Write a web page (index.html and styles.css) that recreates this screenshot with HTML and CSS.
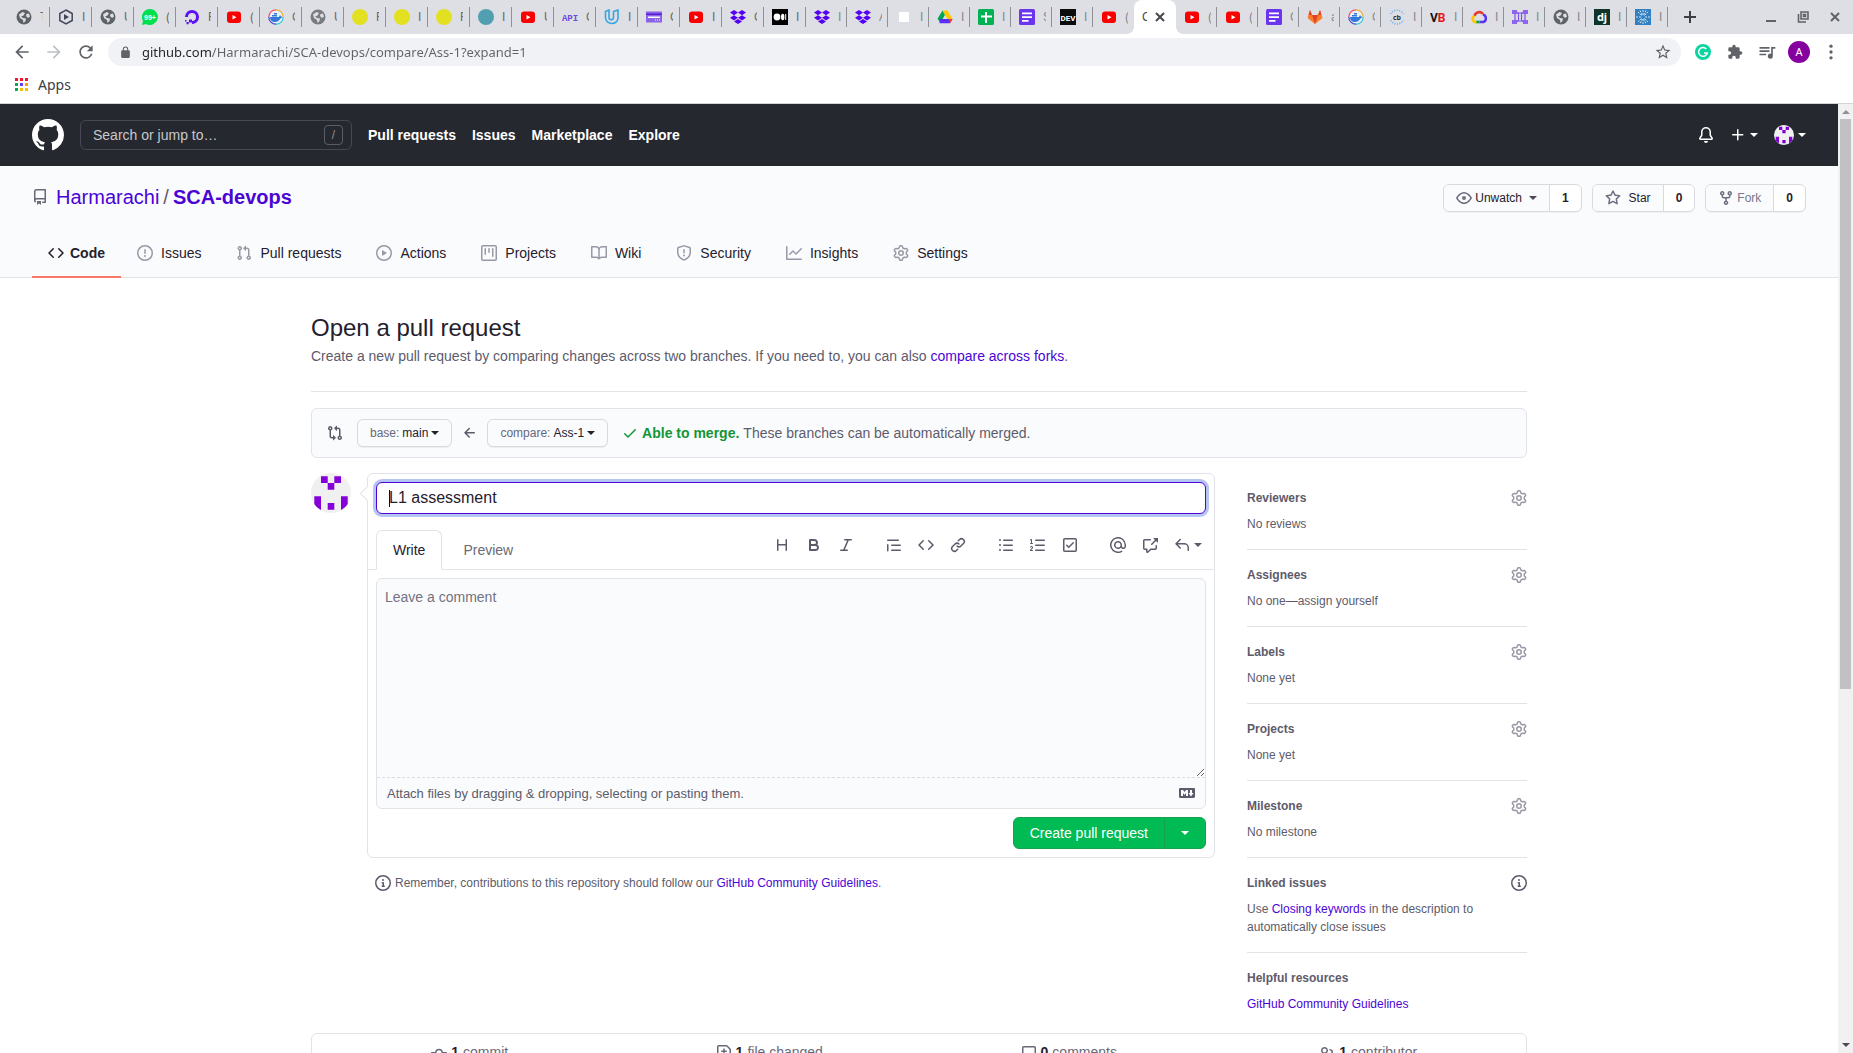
FILE: index.html
```html
<!DOCTYPE html>
<html lang="en">
<head>
<meta charset="utf-8">
<title>Comparing main...Ass-1 · Harmarachi/SCA-devops</title>
<link rel="stylesheet" href="styles.css">
</head>
<body>
<svg class="sprite" aria-hidden="true">
  <!-- tab favicons -->
  <symbol id="f-globe" viewBox="0 0 16 16"><circle cx="8" cy="8" r="7.500" fill="#5f6368"/><path d="M3 5.500L6.500 3 9 4 7.500 6.500 5 7.500 7 9l3 .5-.5 2.500L7.500 14 7 11 4 9zM10.500 5l2.500-.5 1 3-2 1.500-2-2z" fill="#dedfe4"/></symbol>
  <symbol id="f-hex" viewBox="0 0 16 16"><path d="M8 1l6.200 3.500v7L8 15l-6.200-3.500v-7z" fill="none" stroke="#44475a" stroke-width="1.500"/><path d="M6 5l5 3-5 3z" fill="#44475a"/></symbol>
  <symbol id="f-wa" viewBox="0 0 16 16"><path d="M8 0a8 8 0 11-4 15L0 16l1-4A8 8 0 018 0z" fill="#00e04f"/><text x="8" y="10.500" text-anchor="middle" font-size="7" font-weight="700" font-family="Liberation Sans" fill="#fff">99+</text></symbol>
  <symbol id="f-do" viewBox="0 0 16 16"><path d="M8 13.500A5.500 5.500 0 102.500 8" fill="none" stroke="#5b10f5" stroke-width="3"/><path d="M5 10.500h3v3H5zM2.500 13h2.200v2.200H2.500zM1 11h1.500v1.500H1z" fill="#5b10f5"/></symbol>
  <symbol id="f-yt" viewBox="0 0 16 16"><rect x="1" y="2.500" width="14" height="11.500" rx="3" fill="#fa0000"/><path d="M6.500 6l4 2.200-4 2.300z" fill="#fff"/></symbol>
  <symbol id="f-docker" viewBox="0 0 16 16"><circle cx="8" cy="8" r="7.300" fill="#e9eef6"/><path d="M8 .8A7.200 7.200 0 00.8 8" fill="none" stroke="#f2506e" stroke-width="1.200"/><path d="M8 .8A7.200 7.200 0 0115.200 8" fill="none" stroke="#e8b030" stroke-width="1.200"/><path d="M15.200 8A7.200 7.200 0 018 15.200" fill="none" stroke="#27c8d8" stroke-width="1.200"/><path d="M.8 8A7.200 7.200 0 008 15.200" fill="none" stroke="#4540c8" stroke-width="1.200"/><path d="M2 8h9l1-2 1 1.500 1.500.5-2 1.500C11 12 9 13 7 13 4 13 2 11 2 8zM4 6h5v1.500H4zM6 4h3v1.500H6z" fill="#3377d8"/></symbol>
  <symbol id="f-yellow" viewBox="0 0 16 16"><circle cx="8" cy="8" r="8" fill="#e3e022"/></symbol>
  <symbol id="f-teal" viewBox="0 0 16 16"><circle cx="8" cy="8" r="8" fill="#529fb1"/></symbol>
  <symbol id="f-api" viewBox="0 0 16 16"><text x="8" y="11.500" text-anchor="middle" font-size="9" font-weight="700" font-family="Liberation Mono" fill="#6b4be0">API</text></symbol>
  <symbol id="f-udacity" viewBox="0 0 16 16"><path d="M1.500 2.500L5 1v7.500c0 3 4.500 3 4.500 0V2.500L14 1v8c0 3-2.500 5.500-6 5.500S1.500 12 1.500 9z" fill="none" stroke="#38a5e0" stroke-width="1.600"/></symbol>
  <symbol id="f-card" viewBox="0 0 16 16"><path d="M0 2.500h16v11H0z" fill="#8b63e8"/><path d="M0 4.500h16v1.500H0z" fill="#5a1ed2"/><path d="M2 7.500h12v1.500H2z" fill="#fff"/><path d="M9 10.500h1v1H9zm2 0h1v1h-1zm2 0h1v1h-1z" fill="#fff"/></symbol>
  <symbol id="f-dropbox" viewBox="0 0 16 16"><path d="M4 1l4 2.600L4 6.200 0 3.600zM12 1l4 2.600-4 2.600-4-2.600zM4 6.200l4 2.600-4 2.600L0 8.800zM12 6.200l4 2.600-4 2.600-4-2.600zM8 10l4 2.400L8 15l-4-2.600z" fill="#5400f5"/></symbol>
  <symbol id="f-medium" viewBox="0 0 16 16"><path d="M0 0h16v16H0z" fill="#000"/><circle cx="5" cy="8" r="3.400" fill="#fff"/><ellipse cx="10.700" cy="8" rx="1.700" ry="3.200" fill="#fff"/><path d="M13.200 5h1v6h-1z" fill="#fff"/></symbol>
  <symbol id="f-blank" viewBox="0 0 16 16"><path d="M3 3h10v10H3z" fill="#fff"/></symbol>
  <symbol id="f-drive" viewBox="0 0 16 16"><path d="M5.500 1.500L8 5.800 3.500 14 .5 9.800z" fill="#00a650"/><path d="M5.500 1.500h5l5 8.500h-5z" fill="#fdc800"/><path d="M3 10h12.500L13 14.200H2.500z" fill="#5b2ff0"/><path d="M11.500 10h4L13 14.200z" fill="#ee3a2c"/></symbol>
  <symbol id="f-sheets" viewBox="0 0 16 16"><rect width="16" height="16" rx="1.500" fill="#00b252"/><path d="M7 3h2v11H7zM3 6.500h11v2H3z" fill="#fff"/></symbol>
  <symbol id="f-docs" viewBox="0 0 16 16"><rect width="16" height="16" rx="1.500" fill="#6b35f0"/><path d="M3 3.500h10v1.700H3zm0 3.700h10v1.700H3zM3 11h6.500v1.700H3z" fill="#fff"/></symbol>
  <symbol id="f-dev" viewBox="0 0 16 16"><path d="M0 0h16v16H0z" fill="#0c0c0c"/><text x="8" y="11.500" text-anchor="middle" font-size="8" font-weight="700" font-family="Roboto" fill="#fff">DEV</text></symbol>
  <symbol id="f-gitlab" viewBox="0 0 16 16"><path d="M3 1l2 5h6l2-5 2.500 8L8 15 .5 9z" fill="#fa7d2a"/><path d="M3 1l2 5H1.500zM13 1l-2 5h3.500zM5 6h6l-3 9z" fill="#e04428"/></symbol>
  <symbol id="f-cb" viewBox="0 0 16 16"><circle cx="8" cy="8" r="7" fill="none" stroke="#79b3ea" stroke-width="2" stroke-dasharray="1 1.500"/><path d="M0 5h16v6H0z" fill="#dedfe4"/><text x="8" y="10.500" text-anchor="middle" font-size="7" font-weight="700" font-family="Noto Sans" fill="#333">cb</text></symbol>
  <symbol id="f-vb" viewBox="0 0 16 16"><text x="0" y="12.500" font-size="12" font-weight="700" font-family="Roboto" fill="#111">V<tspan fill="#e81414">B</tspan></text></symbol>
  <symbol id="f-cloud" viewBox="0 0 16 16"><path d="M3.500 7A4.800 4.800 0 0112 5" fill="none" stroke="#e8392e" stroke-width="2.600"/><path d="M12 5.500a4 4 0 01.5 7.500H8.500" fill="none" stroke="#5a35f0" stroke-width="2.600"/><path d="M8.500 13H5" stroke="#00a650" stroke-width="2.600"/><path d="M5.500 13A3.200 3.200 0 013.500 7" fill="none" stroke="#fdc400" stroke-width="2.600"/></symbol>
  <symbol id="f-grid" viewBox="0 0 16 16"><path d="M3 2v12M13 2v12M5 3l1.500 2v6L5 13M11 3L9.500 5v6L11 13M4 4h8M4 12h8" fill="none" stroke="#7a4ee8" stroke-width="1.200"/><path d="M0 1h5v4H0zm11 0h5v4h-5zM0 11h5v4H0zm11 0h5v4h-5z" fill="#8c64ee"/></symbol>
  <symbol id="f-dj" viewBox="0 0 16 16"><path d="M0 0h16v16H0z" fill="#10342a"/><text x="8" y="12" text-anchor="middle" font-size="11" font-weight="700" font-family="Noto Sans" fill="#fff">dj</text></symbol>
  <symbol id="f-burst" viewBox="0 0 16 16"><path d="M0 0h16v16H0z" fill="#3280c2"/><path d="M8 1v14M1 8h14M3 3l10 10M13 3L3 13M5 1.500l6 13M11 1.500l-6 13" stroke="#cde2f2" stroke-width="1" stroke-dasharray="2 1"/><circle cx="8" cy="8" r="1.800" fill="#3280c2"/></symbol>
  <!-- browser toolbar -->
  <symbol id="b-back" viewBox="0 0 24 24"><path d="M20 11H7.830l5.590-5.590L12 4l-8 8 8 8 1.410-1.410L7.830 13H20v-2z"/></symbol>
  <symbol id="b-fwd" viewBox="0 0 24 24"><path d="M4 11h12.170l-5.590-5.590L12 4l8 8-8 8-1.410-1.410L16.170 13H4v-2z"/></symbol>
  <symbol id="b-reload" viewBox="0 0 24 24"><path d="M17.650 6.350A7.958 7.958 0 0012 4c-4.420 0-7.990 3.580-7.990 8s3.570 8 7.990 8c3.730 0 6.840-2.550 7.730-6h-2.080A5.990 5.990 0 0112 18c-3.310 0-6-2.690-6-6s2.690-6 6-6c1.660 0 3.140.69 4.220 1.780L13 11h7V4l-2.350 2.350z"/></symbol>
  <symbol id="b-lock" viewBox="0 0 24 24"><path d="M18 8h-1V6A5 5 0 007 6v2H6a2 2 0 00-2 2v10c0 1.100.9 2 2 2h12a2 2 0 002-2V10a2 2 0 00-2-2zM8.900 6a3.100 3.100 0 016.200 0v2H8.900z"/></symbol>
  <symbol id="b-star" viewBox="0 0 24 24"><path d="M22 9.240l-7.190-.62L12 2 9.190 8.630 2 9.240l5.460 4.730L5.820 21 12 17.270 18.180 21l-1.630-7.030L22 9.240zM12 15.400l-3.760 2.270 1-4.280-3.320-2.880 4.380-.38L12 6.100l1.710 4.040 4.380.38-3.320 2.880 1 4.280L12 15.400z"/></symbol>
  <symbol id="b-gram" viewBox="0 0 16 16"><circle cx="8" cy="8" r="8" fill="#0ad49f"/><path d="M11.300 5A4.400 4.400 0 1012.300 9H9" fill="none" stroke="#fff" stroke-width="1.500"/></symbol>
  <symbol id="b-ext" viewBox="0 0 24 24"><path d="M20.500 11H19V7a2 2 0 00-2-2h-4V3.500a2.500 2.500 0 00-5 0V5H4a2 2 0 00-2 2v3.800h1.500a2.700 2.700 0 010 5.400H2V20c0 1.100.9 2 2 2h3.800v-1.500a2.700 2.700 0 015.400 0V22H17a2 2 0 002-2v-4h1.500a2.500 2.500 0 000-5z"/></symbol>
  <symbol id="b-music" viewBox="0 0 24 24"><path d="M15 6H3v2h12V6zm0 4H3v2h12v-2zM3 16h8v-2H3v2zM17 6v8.180A3 3 0 1019 17V8h3V6h-5z"/></symbol>
  <symbol id="b-dots" viewBox="0 0 24 24"><circle cx="12" cy="5" r="2"/><circle cx="12" cy="12" r="2"/><circle cx="12" cy="19" r="2"/></symbol>
  <symbol id="b-plus" viewBox="0 0 14 14"><path d="M6 1h2v5h5v2H8v5H6V8H1V6h5z"/></symbol>
  <symbol id="b-x" viewBox="0 0 14 14"><path d="M3 3l8 8M11 3l-8 8" stroke="currentColor" stroke-width="2"/></symbol>
  <symbol id="b-min" viewBox="0 0 14 14"><path d="M2 10h10v2H2z"/></symbol>
  <symbol id="b-restore" viewBox="0 0 14 14"><path d="M5 2h7v7H5zM7.500 4.500h2v2h-2zM2.500 4v8H10" fill="none" stroke="currentColor" stroke-width="1.600"/></symbol>
  <symbol id="b-apps" viewBox="0 0 14 14"><path d="M0 0h3v3H0zm5 0h3v3H5zm5 0h3v3h-3z" fill="#f4142c"/><path d="M0 5h3v3H0zm0 5h3v3H0z" fill="#0aa65a"/><path d="M5 5h3v3H5z" fill="#6a3af0"/><path d="M10 5h3v3h-3z" fill="#f0a010"/><path d="M5 10h3v3H5zm5 0h3v3h-3z" fill="#fbbc04"/></symbol>
  <!-- site icons -->
  <symbol id="i-mark" viewBox="0 0 16 16"><path d="M8 0C3.580 0 0 3.580 0 8c0 3.540 2.290 6.530 5.470 7.590.4.070.55-.17.55-.38 0-.19-.01-.82-.01-1.490-2.010.37-2.530-.49-2.690-.94-.09-.23-.48-.94-.82-1.130-.28-.15-.68-.52-.01-.53.63-.01 1.080.58 1.230.82.72 1.210 1.870.87 2.330.66.070-.52.280-.87.510-1.070-1.780-.2-3.640-.89-3.640-3.950 0-.87.310-1.590.820-2.150-.08-.2-.36-1.020.080-2.120 0 0 .670-.21 2.200.82.640-.18 1.320-.27 2-.27.680 0 1.360.090 2 .27 1.530-1.040 2.200-.82 2.200-.82.440 1.100.160 1.920.080 2.120.510.56.820 1.270.820 2.150 0 3.070-1.870 3.750-3.650 3.950.290.250.540.730.540 1.480 0 1.070-.01 1.930-.01 2.200 0 .210.150.460.550.380A8.013 8.013 0 0016 8c0-4.420-3.580-8-8-8z"/></symbol>
  <symbol id="i-bell" viewBox="0 0 16 16"><path d="M8 16a2 2 0 001.985-1.750c.017-.137-.097-.25-.235-.25h-3.500c-.138 0-.252.113-.235.25A2 2 0 008 16z"/><path fill-rule="evenodd" d="M8 1.500A3.500 3.500 0 004.500 5v2.947c0 .346-.102.683-.294.97l-1.703 2.556a.018.018 0 00-.003.010l.001.006c0 .002.002.004.004.006l.006.004.007.001h10.964l.007-.001.006-.004.004-.006.001-.007a.017.017 0 00-.003-.010l-1.703-2.554a1.750 1.750 0 01-.294-.970V5A3.500 3.500 0 008 1.500zM3 5a5 5 0 0110 0v2.947c0 .050.015.098.042.139l1.703 2.555A1.518 1.518 0 0113.482 13H2.518a1.518 1.518 0 01-1.263-2.360l1.703-2.554A.250.250 0 003 7.947V5z"/></symbol>
  <symbol id="i-plus" viewBox="0 0 16 16"><path d="M7.750 2a.75.75 0 01.75.75V7h4.250a.75.75 0 110 1.500H8.500v4.250a.75.75 0 11-1.500 0V8.500H2.750a.75.75 0 010-1.500H7V2.750A.75.75 0 017.750 2z"/></symbol>
  <symbol id="i-ident" viewBox="0 0 40 40"><circle cx="20" cy="20" r="20" fill="#f0f0f0"/><path d="M10 3.300h6.700V10H10zM23.300 3.300H30V10h-6.700zM16.700 10h6.600v6.700h-6.600zM16.700 30h6.600v6.700h-6.600zM3.300 23.300H10v13.400h-.5C7 35.200 4.800 33.300 3.300 31zM36.700 23.300H30v13.400h.5C33 35.200 35.200 33.300 36.700 31z" fill="#8600d8"/></symbol>
  <symbol id="i-repo" viewBox="0 0 16 16"><path fill-rule="evenodd" d="M2 2.500A2.500 2.500 0 014.500 0h8.750a.75.75 0 01.75.75v12.500a.75.75 0 01-.75.75h-2.500a.75.75 0 110-1.500h1.750v-2h-8a1 1 0 00-.714 1.700.75.75 0 01-1.072 1.050A2.495 2.495 0 012 11.500v-9zm10.500-1V9h-8c-.356 0-.694.074-1 .208V2.500a1 1 0 011-1h8zM5 12.250v3.250a.25.25 0 00.4.2l1.450-1.087a.25.25 0 01.3 0L8.600 15.700a.25.25 0 00.4-.2v-3.250a.25.25 0 00-.25-.25h-3.500a.25.25 0 00-.25.25z"/></symbol>
  <symbol id="i-code" viewBox="0 0 16 16"><path d="M4.720 3.220a.75.75 0 011.060 1.060L2.060 8l3.720 3.720a.75.75 0 11-1.060 1.060L.47 8.530a.75.75 0 010-1.060l4.250-4.250zm6.560 0a.75.75 0 10-1.060 1.060L13.940 8l-3.720 3.720a.75.75 0 101.060 1.060l4.250-4.250a.75.75 0 000-1.060l-4.250-4.250z"/></symbol>
  <symbol id="i-issue" viewBox="0 0 16 16"><path fill-rule="evenodd" d="M8 1.500a6.500 6.500 0 100 13 6.500 6.500 0 000-13zM0 8a8 8 0 1116 0A8 8 0 010 8zm9 3a1 1 0 11-2 0 1 1 0 012 0zm-.25-6.250a.75.75 0 00-1.500 0v3.500a.75.75 0 001.500 0v-3.500z"/></symbol>
  <symbol id="i-pr" viewBox="0 0 16 16"><path fill-rule="evenodd" d="M7.177 3.073L9.573.677A.25.25 0 0110 .854v4.792a.25.25 0 01-.427.177L7.177 3.427a.25.25 0 010-.354zM3.750 2.500a.75.75 0 100 1.500.75.75 0 000-1.500zm-2.250.75a2.250 2.250 0 113 2.122v5.256a2.251 2.251 0 11-1.500 0V5.372A2.250 2.250 0 011.500 3.250zM11 2.500h-1V4h1a1 1 0 011 1v5.628a2.251 2.251 0 101.500 0V5A2.500 2.500 0 0011 2.500zm1 10.250a.75.75 0 111.500 0 .75.75 0 01-1.500 0zM3.750 12a.75.75 0 100 1.500.75.75 0 000-1.500z"/></symbol>
  <symbol id="i-play" viewBox="0 0 16 16"><path fill-rule="evenodd" d="M1.500 8a6.500 6.500 0 1113 0 6.500 6.500 0 01-13 0zM8 0a8 8 0 100 16A8 8 0 008 0zM6.379 5.227A.25.25 0 006 5.442v5.117a.25.25 0 00.379.214l4.264-2.559a.25.25 0 000-.428L6.379 5.227z"/></symbol>
  <symbol id="i-project" viewBox="0 0 16 16"><path fill-rule="evenodd" d="M1.750 0A1.750 1.750 0 000 1.750v12.500C0 15.216.784 16 1.750 16h12.500A1.750 1.750 0 0016 14.250V1.750A1.750 1.750 0 0014.250 0H1.750zM1.500 1.750a.25.25 0 01.25-.25h12.500a.25.25 0 01.25.25v12.500a.25.25 0 01-.25.25H1.750a.25.25 0 01-.25-.25V1.750zM11.750 3a.75.75 0 00-.75.75v7.500a.75.75 0 001.500 0v-7.500a.75.75 0 00-.75-.75zm-8.250.75a.75.75 0 011.500 0v5.500a.75.75 0 01-1.500 0v-5.500zM8 3a.75.75 0 00-.75.75v3.500a.75.75 0 001.500 0v-3.500A.75.75 0 008 3z"/></symbol>
  <symbol id="i-book" viewBox="0 0 16 16"><path fill-rule="evenodd" d="M0 1.750A.75.75 0 01.75 1h4.253c1.227 0 2.317.59 3 1.501A3.744 3.744 0 0111.006 1h4.245a.75.75 0 01.75.75v10.500a.75.75 0 01-.75.75h-4.507a2.250 2.250 0 00-1.591.659l-.622.621a.75.75 0 01-1.060 0l-.622-.621A2.250 2.250 0 005.258 13H.75a.75.75 0 01-.75-.75V1.750zm8.755 3a2.250 2.250 0 012.250-2.250H14.500v9h-3.757c-.71 0-1.400.201-1.992.572l.004-7.322zm-1.504 7.324l.004-5.073-.002-2.253A2.250 2.250 0 005.003 2.500H1.500v9h3.757a3.750 3.750 0 011.994.574z"/></symbol>
  <symbol id="i-shield" viewBox="0 0 16 16"><path fill-rule="evenodd" d="M7.467.133a1.750 1.750 0 011.066 0l5.250 1.680A1.750 1.750 0 0115 3.480V7c0 1.566-.32 3.182-1.303 4.682-.983 1.498-2.585 2.813-5.032 3.855a1.700 1.700 0 01-1.330 0c-2.447-1.042-4.049-2.357-5.032-3.855C1.320 10.182 1 8.566 1 7V3.480a1.750 1.750 0 011.217-1.667l5.250-1.680zm.61 1.429a.25.25 0 00-.153 0l-5.250 1.680a.25.25 0 00-.174.238V7c0 1.358.275 2.666 1.057 3.860.784 1.194 2.121 2.340 4.366 3.297a.2.2 0 00.154 0c2.245-.956 3.582-2.104 4.366-3.298C13.225 9.666 13.500 8.360 13.500 7V3.480a.25.25 0 00-.174-.237l-5.250-1.680zM9 10.500a1 1 0 11-2 0 1 1 0 012 0zm-.25-5.750a.75.75 0 10-1.500 0v3a.75.75 0 001.500 0v-3z"/></symbol>
  <symbol id="i-graph" viewBox="0 0 16 16"><path d="M1.500 1.750a.75.75 0 00-1.500 0v12.500c0 .414.336.75.75.75h14.500a.75.75 0 000-1.500H1.500V1.750zm14.280 2.530a.75.75 0 00-1.060-1.060L10 7.940 7.530 5.470a.75.75 0 00-1.060 0L3.220 8.720a.75.75 0 001.060 1.060L7 7.060l2.470 2.470a.75.75 0 001.060 0l5.250-5.250z"/></symbol>
  <symbol id="i-gear" viewBox="0 0 16 16"><path fill-rule="evenodd" d="M7.429 1.525a6.593 6.593 0 011.142 0c.036.003.108.036.137.146l.289 1.105c.147.56.55.967.997 1.189.174.086.341.183.501.29.417.278.97.423 1.530.27l1.102-.303c.11-.03.175.016.195.046.219.31.41.641.573.989.014.031.022.11-.059.19l-.815.806c-.411.406-.562.957-.53 1.456a4.588 4.588 0 010 .582c-.032.499.119 1.050.53 1.456l.815.806c.08.08.073.159.059.19a6.494 6.494 0 01-.573.99c-.02.029-.086.074-.195.045l-1.103-.303c-.559-.153-1.112-.008-1.529.27-.16.107-.327.204-.5.29-.449.222-.851.628-.998 1.189l-.289 1.105c-.029.11-.101.143-.137.146a6.613 6.613 0 01-1.142 0c-.036-.003-.108-.037-.137-.146l-.289-1.105c-.147-.56-.55-.967-.997-1.189a4.502 4.502 0 01-.501-.29c-.417-.278-.97-.423-1.530-.27l-1.102.303c-.11.03-.175-.016-.195-.046a6.492 6.492 0 01-.573-.989c-.014-.031-.022-.11.059-.19l.815-.806c.411-.406.562-.957.53-1.456a4.587 4.587 0 010-.582c.032-.499-.119-1.050-.53-1.456l-.815-.806c-.08-.08-.073-.159-.059-.19a6.440 6.440 0 01.573-.99c.02-.029.086-.075.195-.045l1.103.303c.559.153 1.112.008 1.529-.27.16-.107.327-.204.5-.29.449-.222.851-.628.998-1.189l.289-1.105c.029-.11.101-.143.137-.146zM8 0c-.236 0-.47.01-.701.03-.743.065-1.290.615-1.458 1.261l-.29 1.106c-.017.066-.078.158-.211.224a5.994 5.994 0 00-.668.386c-.123.082-.233.09-.3.071L3.270 2.776c-.644-.177-1.392.02-1.820.63a7.977 7.977 0 00-.704 1.217c-.315.675-.111 1.422.363 1.891l.815.806c.05.048.098.147.088.294a6.084 6.084 0 000 .772c.01.147-.038.246-.088.294l-.815.806c-.474.469-.678 1.216-.363 1.891.2.428.436.835.704 1.218.428.609 1.176.806 1.820.63l1.103-.303c.066-.019.176-.011.299.071.213.143.436.272.668.386.133.066.194.158.212.224l.289 1.106c.169.646.715 1.196 1.458 1.260a8.094 8.094 0 001.402 0c.743-.064 1.290-.614 1.458-1.260l.29-1.106c.017-.066.078-.158.211-.224a5.980 5.980 0 00.668-.386c.123-.082.233-.09.3-.071l1.102.302c.644.177 1.392-.02 1.820-.63.268-.382.505-.789.704-1.217.315-.675.111-1.422-.364-1.891l-.814-.806c-.05-.048-.098-.147-.088-.294a6.100 6.100 0 000-.772c-.01-.147.039-.246.088-.294l.814-.806c.475-.469.679-1.216.364-1.891a7.992 7.992 0 00-.704-1.218c-.428-.609-1.176-.806-1.820-.63l-1.103.303c-.066.019-.176.011-.299-.071a5.991 5.991 0 00-.668-.386c-.133-.066-.194-.158-.212-.224L10.160 1.290C9.990.645 9.444.095 8.701.031A8.094 8.094 0 008 0zm1.500 8a1.500 1.500 0 11-3 0 1.500 1.500 0 013 0zM11 8a3 3 0 11-6 0 3 3 0 016 0z"/></symbol>
  <symbol id="i-eye" viewBox="0 0 16 16"><path fill-rule="evenodd" d="M1.679 7.932c.412-.621 1.242-1.750 2.366-2.717C5.175 4.242 6.527 3.500 8 3.500c1.473 0 2.824.742 3.955 1.715 1.124.967 1.954 2.096 2.366 2.717a.119.119 0 010 .136c-.412.621-1.242 1.750-2.366 2.717C10.825 11.758 9.473 12.500 8 12.500c-1.473 0-2.824-.742-3.955-1.715C2.920 9.818 2.090 8.690 1.679 8.068a.119.119 0 010-.136zM8 2c-1.981 0-3.670.992-4.933 2.078C1.797 5.169.88 6.423.43 7.100a1.619 1.619 0 000 1.798c.45.678 1.367 1.932 2.637 3.024C4.329 13.008 6.019 14 8 14c1.981 0 3.670-.992 4.933-2.078 1.270-1.091 2.187-2.345 2.637-3.023a1.619 1.619 0 000-1.798c-.45-.678-1.367-1.932-2.637-3.023C11.671 2.992 9.981 2 8 2zm0 8a2 2 0 100-4 2 2 0 000 4z"/></symbol>
  <symbol id="i-star" viewBox="0 0 16 16"><path fill-rule="evenodd" d="M8 .25a.75.75 0 01.673.418l1.882 3.815 4.210.612a.75.75 0 01.416 1.279l-3.046 2.970.719 4.192a.75.75 0 01-1.088.791L8 12.347l-3.766 1.980a.75.75 0 01-1.088-.79l.72-4.194L.818 6.374a.75.75 0 01.416-1.280l4.210-.611L7.327.668A.75.75 0 018 .25zm0 2.445L6.615 5.500a.75.75 0 01-.564.41l-3.097.45 2.240 2.184a.75.75 0 01.216.664l-.528 3.084 2.769-1.456a.75.75 0 01.698 0l2.770 1.456-.53-3.084a.75.75 0 01.216-.664l2.240-2.183-3.096-.45a.75.75 0 01-.564-.41L8 2.694v.001z"/></symbol>
  <symbol id="i-fork" viewBox="0 0 16 16"><path fill-rule="evenodd" d="M5 3.250a.75.75 0 11-1.500 0 .75.75 0 011.500 0zm0 2.122a2.250 2.250 0 10-1.500 0v.878A2.250 2.250 0 005.750 8.500h1.500v2.128a2.251 2.251 0 101.500 0V8.500h1.500a2.250 2.250 0 002.250-2.250v-.878a2.250 2.250 0 10-1.500 0v.878a.75.75 0 01-.75.75h-4.500A.75.75 0 015 6.250v-.878zm3.750 7.378a.75.75 0 11-1.500 0 .75.75 0 011.500 0zm3-8.750a.75.75 0 100-1.500.75.75 0 000 1.500z"/></symbol>
  <symbol id="i-compare" viewBox="0 0 16 16"><path fill-rule="evenodd" d="M9.573.677L7.177 3.073a.25.25 0 000 .354l2.396 2.396A.25.25 0 0010 5.646V4h1a1 1 0 011 1v5.628a2.251 2.251 0 101.500 0V5A2.500 2.500 0 0011 2.500h-1V.854a.25.25 0 00-.427-.177zM6 12v-1.646a.25.25 0 01.427-.177l2.396 2.396a.25.25 0 010 .354l-2.396 2.396A.25.25 0 016 15.146V13.500H5A2.500 2.500 0 012.500 11V5.372a2.250 2.250 0 111.500 0V11a1 1 0 001 1h1zm6.750 0a.75.75 0 100 1.500.75.75 0 000-1.500zM4 3.250a.75.75 0 11-1.500 0 .75.75 0 011.500 0z"/></symbol>
  <symbol id="i-left" viewBox="0 0 16 16"><path d="M7.780 12.530a.75.75 0 01-1.060 0L2.470 8.280a.75.75 0 010-1.060l4.250-4.250a.75.75 0 011.060 1.060L4.810 7h7.440a.75.75 0 010 1.500H4.810l2.970 2.970a.75.75 0 010 1.060z"/></symbol>
  <symbol id="i-check" viewBox="0 0 16 16"><path d="M13.780 4.220a.75.75 0 010 1.060l-7.250 7.250a.75.75 0 01-1.060 0L2.220 9.280a.75.75 0 011.060-1.060L6 10.940l6.720-6.720a.75.75 0 011.060 0z"/></symbol>
  <symbol id="i-info" viewBox="0 0 16 16"><path fill-rule="evenodd" d="M8 1.500a6.500 6.500 0 100 13 6.500 6.500 0 000-13zM0 8a8 8 0 1116 0A8 8 0 010 8zm6.500-.25A.75.75 0 017.250 7h1a.75.75 0 01.75.75v2.750h.25a.75.75 0 010 1.500h-2a.75.75 0 010-1.500h.25v-2h-.25a.75.75 0 01-.75-.75zM8 6a1 1 0 100-2 1 1 0 000 2z"/></symbol>
  <symbol id="i-h" viewBox="0 0 16 16"><path d="M3.750 2a.75.75 0 01.75.75V7h7V2.750a.75.75 0 011.500 0v10.500a.75.75 0 01-1.500 0V8.500h-7v4.750a.75.75 0 01-1.500 0V2.750A.75.75 0 013.750 2z"/></symbol>
  <symbol id="i-b" viewBox="0 0 16 16"><path fill-rule="evenodd" d="M4 2a1 1 0 00-1 1v10a1 1 0 001 1h5.500a3.500 3.500 0 001.852-6.470A3.500 3.500 0 008.500 2H4zm4.500 5a1.500 1.500 0 100-3H5v3h3.500zM5 9v3h4.500a1.500 1.500 0 000-3H5z"/></symbol>
  <symbol id="i-i" viewBox="0 0 16 16"><path d="M6 2.750A.75.75 0 016.750 2h6.500a.75.75 0 010 1.500h-2.505l-3.858 9H9.250a.75.75 0 010 1.500h-6.500a.75.75 0 010-1.500h2.505l3.858-9H6.750A.75.75 0 016 2.750z"/></symbol>
  <symbol id="i-quote" viewBox="0 0 16 16"><path d="M1.750 2.500a.75.75 0 000 1.500h10.500a.75.75 0 000-1.500H1.750zm4 5a.75.75 0 000 1.500h8.500a.75.75 0 000-1.500h-8.500zm0 5a.75.75 0 000 1.500h8.500a.75.75 0 000-1.500h-8.500zM2.500 7.750a.75.75 0 00-1.500 0v6a.75.75 0 001.500 0v-6z"/></symbol>
  <symbol id="i-link" viewBox="0 0 16 16"><path d="M7.775 3.275a.75.75 0 001.060 1.060l1.250-1.250a2 2 0 112.830 2.830l-2.500 2.500a2 2 0 01-2.830 0 .75.75 0 00-1.060 1.060 3.500 3.500 0 004.950 0l2.500-2.500a3.500 3.500 0 00-4.950-4.950l-1.250 1.250zm-4.690 9.640a2 2 0 010-2.830l2.500-2.500a2 2 0 012.830 0 .75.75 0 001.060-1.060 3.500 3.500 0 00-4.950 0l-2.500 2.500a3.500 3.500 0 004.950 4.950l1.250-1.250a.75.75 0 00-1.060-1.060l-1.250 1.250a2 2 0 01-2.830 0z"/></symbol>
  <symbol id="i-ul" viewBox="0 0 16 16"><path d="M2 4a1 1 0 100-2 1 1 0 000 2zm3.750-1.500a.75.75 0 000 1.500h8.500a.75.75 0 000-1.500h-8.500zm0 5a.75.75 0 000 1.500h8.500a.75.75 0 000-1.500h-8.500zm0 5a.75.75 0 000 1.500h8.500a.75.75 0 000-1.500h-8.500zM3 8a1 1 0 11-2 0 1 1 0 012 0zm-1 6a1 1 0 100-2 1 1 0 000 2z"/></symbol>
  <symbol id="i-ol" viewBox="0 0 16 16"><path d="M2.003 2.500a.5.5 0 00-.723-.447l-1.003.5a.5.5 0 00.446.895l.28-.14V6H.5a.5.5 0 000 1h2.006a.5.5 0 100-1h-.503V2.500zM5 3.250a.75.75 0 01.75-.75h8.500a.75.75 0 010 1.500h-8.500A.75.75 0 015 3.250zm0 5a.75.75 0 01.75-.75h8.500a.75.75 0 010 1.500h-8.500A.75.75 0 015 8.250zm0 5a.75.75 0 01.75-.75h8.500a.75.75 0 010 1.500h-8.500a.75.75 0 01-.75-.75zM.924 10.320l.003-.004a.851.851 0 01.144-.153A.66.66 0 011.500 10c.195 0 .306.068.374.146a.57.57 0 01.128.376c0 .453-.269.682-.8 1.078l-.035.025C.692 11.980 0 12.495 0 13.500a.5.5 0 00.5.5h2.003a.5.5 0 000-1H1.146c.132-.197.351-.372.654-.597l.047-.035c.47-.35 1.156-.858 1.156-1.845 0-.365-.118-.744-.377-1.038-.268-.303-.658-.484-1.126-.484-.48 0-.84.202-1.068.392a1.858 1.858 0 00-.348.384l-.007.011-.002.004-.001.002-.001.001a.5.5 0 00.851.525z"/></symbol>
  <symbol id="i-task" viewBox="0 0 16 16"><path fill-rule="evenodd" d="M2.500 2.750a.25.25 0 01.25-.25h10.500a.25.25 0 01.25.25v10.500a.25.25 0 01-.25.25H2.750a.25.25 0 01-.25-.25V2.750zM2.750 1A1.750 1.750 0 001 2.750v10.500c0 .966.784 1.750 1.750 1.750h10.500A1.750 1.750 0 0015 13.250V2.750A1.750 1.750 0 0013.250 1H2.750zm9.030 5.280a.75.75 0 00-1.060-1.060L6.750 9.190 5.280 7.720a.75.75 0 00-1.060 1.060l2 2a.75.75 0 001.060 0l4.500-4.500z"/></symbol>
  <symbol id="i-at" viewBox="0 0 16 16"><path fill-rule="evenodd" d="M4.750 2.370a6.500 6.500 0 006.500 11.260.75.75 0 01.75 1.298 8 8 0 113.994-7.273.754.754 0 01.006.095v1.500a2.750 2.750 0 01-5.072 1.475A4 4 0 1112 8v1.250a1.250 1.250 0 002.500 0V7.867a6.500 6.500 0 00-9.750-5.496V2.370zM10.500 8a2.500 2.500 0 10-5 0 2.500 2.500 0 005 0z"/></symbol>
  <symbol id="i-ref" viewBox="0 0 16 16"><path d="M16 1.250v4.146a.25.25 0 01-.427.177L14.030 4.030l-3.750 3.750a.75.75 0 11-1.060-1.060l3.750-3.750-1.543-1.543A.25.25 0 0111.604 1h4.146a.25.25 0 01.25.25zM2.750 3.500a.25.25 0 00-.25.25v7.500c0 .138.112.25.25.25h2a.75.75 0 01.75.75v2.190l2.720-2.720a.75.75 0 01.53-.22h4.500a.25.25 0 00.25-.25v-2.500a.75.75 0 111.500 0v2.500A1.750 1.750 0 0113.250 13H9.060l-2.573 2.573A1.457 1.457 0 014 14.543V13H2.750A1.750 1.750 0 011 11.250v-7.500C1 2.784 1.784 2 2.750 2h5.500a.75.75 0 010 1.500h-5.500z"/></symbol>
  <symbol id="i-reply" viewBox="0 0 16 16"><path d="M6.780 1.970a.75.75 0 010 1.060L3.810 6h6.440A4.750 4.750 0 0115 10.750v2.500a.75.75 0 01-1.500 0v-2.500a3.250 3.250 0 00-3.250-3.250H3.810l2.970 2.970a.75.75 0 11-1.060 1.060L1.470 7.280a.75.75 0 010-1.060l4.250-4.250a.75.75 0 011.060 0z"/></symbol>
  <symbol id="i-md" viewBox="0 0 16 16"><path fill-rule="evenodd" d="M14.850 3H1.150C.52 3 0 3.520 0 4.150v7.690C0 12.480.52 13 1.150 13h13.690c.64 0 1.150-.52 1.150-1.150v-7.700C16 3.520 15.480 3 14.850 3zM9 11H7V8L5.500 9.920 4 8v3H2V5h2l1.500 2L7 5h2v6zm2.990.5L9.500 8H11V5h2v3h1.500l-2.510 3.500z"/></symbol>
  <symbol id="i-commit" viewBox="0 0 16 16"><path fill-rule="evenodd" d="M10.500 7.750a2.500 2.500 0 11-5 0 2.500 2.500 0 015 0zm1.430.75a4.002 4.002 0 01-7.860 0H.75a.75.75 0 110-1.500h3.320a4.001 4.001 0 017.860 0h3.320a.75.75 0 110 1.500h-3.320z"/></symbol>
  <symbol id="i-file" viewBox="0 0 16 16"><path fill-rule="evenodd" d="M2.750 1.500a.25.25 0 00-.25.25v12.500c0 .138.112.25.25.25h10.500a.25.25 0 00.25-.25V4.664a.25.25 0 00-.073-.177l-2.914-2.914a.25.25 0 00-.177-.073H2.750zM1 1.750C1 .784 1.784 0 2.750 0h7.586c.464 0 .909.184 1.237.513l2.914 2.914c.329.328.513.773.513 1.237v9.586A1.750 1.750 0 0113.250 16H2.750A1.750 1.750 0 011 14.250V1.750zm7 1.500a.75.75 0 01.75.75v1.500h1.500a.75.75 0 010 1.500h-1.500v1.500a.75.75 0 01-1.500 0V7h-1.500a.75.75 0 010-1.500h1.500V4A.75.75 0 018 3.250zm-3 8a.75.75 0 01.75-.75h4.500a.75.75 0 010 1.500h-4.500a.75.75 0 01-.75-.75z"/></symbol>
  <symbol id="i-comment" viewBox="0 0 16 16"><path fill-rule="evenodd" d="M2.750 2.500a.25.25 0 00-.25.25v7.500c0 .138.112.25.25.25h2a.75.75 0 01.75.75v2.190l2.720-2.720a.75.75 0 01.53-.22h4.500a.25.25 0 00.25-.25v-7.500a.25.25 0 00-.25-.25H2.750zM1 2.750C1 1.784 1.784 1 2.750 1h10.500c.966 0 1.750.784 1.750 1.750v7.500A1.750 1.750 0 0113.250 12H9.060l-2.573 2.573A1.457 1.457 0 014 13.543V12H2.750A1.750 1.750 0 011 10.250v-7.500z"/></symbol>
  <symbol id="i-people" viewBox="0 0 16 16"><path fill-rule="evenodd" d="M5.500 3.500a2 2 0 100 4 2 2 0 000-4zM2 5.500a3.500 3.500 0 115.898 2.549 5.507 5.507 0 013.034 4.084.75.75 0 11-1.482.235 4.001 4.001 0 00-7.900 0 .75.75 0 01-1.482-.236A5.507 5.507 0 013.102 8.050 3.490 3.490 0 012 5.500zM11 4a.75.75 0 100 1.500 1.500 1.500 0 01.666 2.844.75.75 0 00-.416.672v.352a.75.75 0 00.574.73c1.200.289 2.162 1.200 2.522 2.372a.75.75 0 101.434-.44 5.010 5.010 0 00-2.560-3.012A3 3 0 0011 4z"/></symbol>
</svg>

<div class="browser">
  <div class="tabstrip">
    <div class="tabs">
      <a href="#" class="tab"><svg><use href="#f-globe"/></svg><span>T</span></a>
      <a href="#" class="tab"><svg><use href="#f-hex"/></svg><span>I</span></a>
      <a href="#" class="tab"><svg><use href="#f-globe"/></svg><span>U</span></a>
      <a href="#" class="tab"><svg><use href="#f-wa"/></svg><span>(</span></a>
      <a href="#" class="tab"><svg><use href="#f-do"/></svg><span>F</span></a>
      <a href="#" class="tab"><svg><use href="#f-yt"/></svg><span>(</span></a>
      <a href="#" class="tab"><svg><use href="#f-docker"/></svg><span>C</span></a>
      <a href="#" class="tab faded"><svg><use href="#f-globe"/></svg><span>U</span></a>
      <a href="#" class="tab"><svg><use href="#f-yellow"/></svg><span>F</span></a>
      <a href="#" class="tab"><svg><use href="#f-yellow"/></svg><span>I</span></a>
      <a href="#" class="tab"><svg><use href="#f-yellow"/></svg><span>F</span></a>
      <a href="#" class="tab"><svg><use href="#f-teal"/></svg><span>I</span></a>
      <a href="#" class="tab"><svg><use href="#f-yt"/></svg><span>U</span></a>
      <a href="#" class="tab"><svg><use href="#f-api"/></svg><span>C</span></a>
      <a href="#" class="tab"><svg><use href="#f-udacity"/></svg><span>I</span></a>
      <a href="#" class="tab"><svg><use href="#f-card"/></svg><span>C</span></a>
      <a href="#" class="tab"><svg><use href="#f-yt"/></svg><span>I</span></a>
      <a href="#" class="tab"><svg><use href="#f-dropbox"/></svg><span>C</span></a>
      <a href="#" class="tab"><svg><use href="#f-medium"/></svg><span>I</span></a>
      <a href="#" class="tab narrow"><svg><use href="#f-dropbox"/></svg><span>I</span></a>
      <a href="#" class="tab narrow"><svg><use href="#f-dropbox"/></svg><span>A</span></a>
      <a href="#" class="tab narrow"><svg><use href="#f-blank"/></svg><span>I</span></a>
      <a href="#" class="tab narrow"><svg><use href="#f-drive"/></svg><span>I</span></a>
      <a href="#" class="tab narrow"><svg><use href="#f-sheets"/></svg><span>I</span></a>
      <a href="#" class="tab narrow"><svg><use href="#f-docs"/></svg><span>S</span></a>
      <a href="#" class="tab narrow"><svg><use href="#f-dev"/></svg><span>I</span></a>
      <a href="#" class="tab narrow last"><svg><use href="#f-yt"/></svg><span>(</span></a>
      <div class="tab active"><span>C</span><button class="plain" aria-label="Close tab"><svg><use href="#b-x"/></svg></button></div>
      <a href="#" class="tab narrow"><svg><use href="#f-yt"/></svg><span>(</span></a>
      <a href="#" class="tab narrow"><svg><use href="#f-yt"/></svg><span>(</span></a>
      <a href="#" class="tab narrow"><svg><use href="#f-docs"/></svg><span>C</span></a>
      <a href="#" class="tab narrow"><svg><use href="#f-gitlab"/></svg><span>a</span></a>
      <a href="#" class="tab narrow"><svg><use href="#f-docker"/></svg><span>C</span></a>
      <a href="#" class="tab narrow"><svg><use href="#f-cb"/></svg><span>I</span></a>
      <a href="#" class="tab narrow"><svg><use href="#f-vb"/></svg><span>I</span></a>
      <a href="#" class="tab narrow"><svg><use href="#f-cloud"/></svg><span>I</span></a>
      <a href="#" class="tab narrow"><svg><use href="#f-grid"/></svg><span>I</span></a>
      <a href="#" class="tab narrow"><svg><use href="#f-globe"/></svg><span>I</span></a>
      <a href="#" class="tab narrow"><svg><use href="#f-dj"/></svg><span>I</span></a>
      <a href="#" class="tab narrow"><svg><use href="#f-burst"/></svg><span>I</span></a>
    </div>
    <button class="plain newtab" aria-label="New tab"><svg><use href="#b-plus"/></svg></button>
    <div class="winctl">
      <button class="plain" aria-label="Minimize"><svg><use href="#b-min"/></svg></button>
      <button class="plain" aria-label="Restore"><svg><use href="#b-restore"/></svg></button>
      <button class="plain" aria-label="Close"><svg><use href="#b-x"/></svg></button>
    </div>
  </div>
  <div class="toolbar">
    <div class="toolgroup">
      <button class="plain" aria-label="Back"><svg><use href="#b-back"/></svg></button>
      <button class="plain dim" aria-label="Forward"><svg><use href="#b-fwd"/></svg></button>
      <button class="plain" aria-label="Reload"><svg><use href="#b-reload"/></svg></button>
    </div>
    <div class="omnibox">
      <svg class="lock"><use href="#b-lock"/></svg>
      <input type="text" aria-label="Address" value="github.com/Harmarachi/SCA-devops/compare/Ass-1?expand=1">
      <button class="plain" aria-label="Bookmark"><svg><use href="#b-star"/></svg></button>
    </div>
    <div class="toolgroup">
      <button class="plain" aria-label="Grammarly"><svg><use href="#b-gram"/></svg></button>
      <button class="plain" aria-label="Extensions"><svg><use href="#b-ext"/></svg></button>
      <button class="plain" aria-label="Media"><svg><use href="#b-music"/></svg></button>
      <button class="plain" aria-label="Profile"><span class="profile">A</span></button>
      <button class="plain" aria-label="Menu"><svg><use href="#b-dots"/></svg></button>
    </div>
  </div>
  <div class="bookmarks"><a href="#"><svg><use href="#b-apps"/></svg>Apps</a></div>
</div>

<div class="viewport">
  <div class="page">
    <header class="site-header">
      <a href="#" class="mark" aria-label="Homepage"><svg><use href="#i-mark"/></svg></a>
      <label class="search"><input type="text" placeholder="Search or jump to…" aria-label="Search or jump to"><kbd>/</kbd></label>
      <nav><a href="#">Pull requests</a><a href="#">Issues</a><a href="#">Marketplace</a><a href="#">Explore</a></nav>
      <div class="user">
        <a href="#" aria-label="Notifications"><svg class="icon"><use href="#i-bell"/></svg></a>
        <button class="plain" aria-label="Create new"><svg class="icon"><use href="#i-plus"/></svg><i class="caret"></i></button>
        <button class="plain" aria-label="Account"><svg class="avatar-sm"><use href="#i-ident"/></svg><i class="caret"></i></button>
      </div>
    </header>

    <div class="repo-head">
      <div class="repo-row">
        <h1><svg class="icon"><use href="#i-repo"/></svg><a href="#">Harmarachi</a><span>/</span><a href="#"><strong>SCA-devops</strong></a></h1>
        <div class="repo-actions">
          <div class="count-btn"><button><svg class="icon"><use href="#i-eye"/></svg>Unwatch<i class="caret"></i></button><a href="#">1</a></div>
          <div class="count-btn star"><button><svg class="icon"><use href="#i-star"/></svg>Star</button><a href="#">0</a></div>
          <div class="count-btn fork"><button disabled><svg class="icon"><use href="#i-fork"/></svg>Fork</button><a href="#">0</a></div>
        </div>
      </div>
      <nav class="repo-nav">
        <a href="#" class="selected"><svg class="icon"><use href="#i-code"/></svg>Code</a>
        <a href="#"><svg class="icon"><use href="#i-issue"/></svg>Issues</a>
        <a href="#"><svg class="icon"><use href="#i-pr"/></svg>Pull requests</a>
        <a href="#"><svg class="icon"><use href="#i-play"/></svg>Actions</a>
        <a href="#"><svg class="icon"><use href="#i-project"/></svg>Projects</a>
        <a href="#"><svg class="icon"><use href="#i-book"/></svg>Wiki</a>
        <a href="#"><svg class="icon"><use href="#i-shield"/></svg>Security</a>
        <a href="#"><svg class="icon"><use href="#i-graph"/></svg>Insights</a>
        <a href="#"><svg class="icon"><use href="#i-gear"/></svg>Settings</a>
      </nav>
    </div>

    <main class="container">
      <div class="subhead">
        <h2>Open a pull request</h2>
        <p>Create a new pull request by comparing changes across two branches. If you need to, you can also <a href="#">compare across forks</a>.</p>
      </div>

      <div class="range">
        <svg class="icon"><use href="#i-compare"/></svg>
        <button class="btn-sm"><span>base:</span> main<i class="caret"></i></button>
        <svg class="icon arrow"><use href="#i-left"/></svg>
        <button class="btn-sm"><span>compare:</span> Ass-1<i class="caret"></i></button>
        <p class="merge"><svg class="icon"><use href="#i-check"/></svg><strong>Able to merge.</strong> These branches can be automatically merged.</p>
      </div>

      <div class="columns">
        <div class="discussion">
          <svg class="avatar"><use href="#i-ident"/></svg>
          <div>
            <form class="compose">
              <div class="title-field"><input type="text" aria-label="Title" value="L1 assessment"></div>
              <div class="compose-head">
                <div class="compose-tabs"><button type="button" class="on">Write</button><button type="button">Preview</button></div>
                <div class="md-tools">
                  <div><button type="button" aria-label="Heading"><svg class="icon"><use href="#i-h"/></svg></button><button type="button" aria-label="Bold"><svg class="icon"><use href="#i-b"/></svg></button><button type="button" aria-label="Italic"><svg class="icon"><use href="#i-i"/></svg></button></div>
                  <div><button type="button" aria-label="Quote"><svg class="icon"><use href="#i-quote"/></svg></button><button type="button" aria-label="Code"><svg class="icon"><use href="#i-code"/></svg></button><button type="button" aria-label="Link"><svg class="icon"><use href="#i-link"/></svg></button></div>
                  <div><button type="button" aria-label="Bulleted list"><svg class="icon"><use href="#i-ul"/></svg></button><button type="button" aria-label="Numbered list"><svg class="icon"><use href="#i-ol"/></svg></button><button type="button" aria-label="Task list"><svg class="icon"><use href="#i-task"/></svg></button></div>
                  <div><button type="button" aria-label="Mention"><svg class="icon"><use href="#i-at"/></svg></button><button type="button" aria-label="Reference"><svg class="icon"><use href="#i-ref"/></svg></button><button type="button" aria-label="Saved replies"><svg class="icon"><use href="#i-reply"/></svg><i class="caret"></i></button></div>
                </div>
              </div>
              <div class="editor">
                <textarea placeholder="Leave a comment" aria-label="Comment"></textarea>
                <label class="attach">Attach files by dragging &amp; dropping, selecting or pasting them.<svg class="icon"><use href="#i-md"/></svg></label>
              </div>
              <div class="submit"><button type="button">Create pull request</button><button type="button" aria-label="More options"><i class="caret"></i></button></div>
            </form>
            <p class="remember"><svg class="icon"><use href="#i-info"/></svg>Remember, contributions to this repository should follow our&nbsp;<a href="#">GitHub Community Guidelines</a>.</p>
          </div>
        </div>

        <aside class="sidebar">
          <section><h3>Reviewers<svg class="icon"><use href="#i-gear"/></svg></h3><p>No reviews</p></section>
          <section><h3>Assignees<svg class="icon"><use href="#i-gear"/></svg></h3><p>No one—assign yourself</p></section>
          <section><h3>Labels<svg class="icon"><use href="#i-gear"/></svg></h3><p>None yet</p></section>
          <section><h3>Projects<svg class="icon"><use href="#i-gear"/></svg></h3><p>None yet</p></section>
          <section><h3>Milestone<svg class="icon"><use href="#i-gear"/></svg></h3><p>No milestone</p></section>
          <section><h3>Linked issues<svg class="icon dark"><use href="#i-info"/></svg></h3><p>Use <a href="#">Closing keywords</a> in the description to automatically close issues</p></section>
          <section><h3>Helpful resources</h3><p><a href="#">GitHub Community Guidelines</a></p></section>
        </aside>
      </div>

      <ul class="totals">
        <li><svg class="icon"><use href="#i-commit"/></svg><strong>1</strong> commit</li>
        <li><svg class="icon"><use href="#i-file"/></svg><strong>1</strong> file changed</li>
        <li><svg class="icon"><use href="#i-comment"/></svg><strong>0</strong> comments</li>
        <li><svg class="icon"><use href="#i-people"/></svg><strong>1</strong> contributor</li>
      </ul>
    </main>
  </div>
  <div class="scrollbar" aria-hidden="true"><i class="up"></i><div class="track"><div class="thumb"></div></div><i class="down"></i></div>
</div>
</body>
</html>
```
FILE: styles.css
```css
* { box-sizing: border-box; }

:root {
  --link: #4a04d6;
  --text: #25202d;
  --muted: #5d5b6b;
  --icon: #9799a6;
  --line: #e2e3e8;
  --canvas: #fafbfd;
}

body {
  margin: 0;
  height: 100vh;
  overflow: hidden;
  display: flex;
  flex-direction: column;
  background: #fff;
  color: var(--text);
  font: 14px/21px "Liberation Sans", Arial, sans-serif;
}

h1, h2, h3, p, ul { margin: 0; padding: 0; font-weight: 400; }
a { color: var(--link); text-decoration: none; }
button, input, textarea { font: inherit; color: inherit; }
svg { display: block; flex: none; fill: currentColor; }
.sprite { display: none; }
.icon { width: 16px; height: 16px; }
.plain { display: flex; align-items: center; justify-content: center; border: 0; padding: 0; background: none; }
.caret { flex: none; border: 4px solid transparent; border-top-color: currentColor; border-bottom: 0; }

/* browser chrome */
.browser { flex: none; color: #5f6368; font-family: "Noto Sans", sans-serif; border-bottom: 1px solid #d5d5d8; }
.tabstrip { display: flex; align-items: center; height: 34px; padding-left: 8px; background: #dedfe4; }
.tabs { display: flex; align-items: center; }
.tab { display: flex; align-items: center; gap: 8px; width: 42px; height: 20px; padding-left: 8px; border-right: 1px solid #8f9197; color: #66696f; font: 12px/20px "Liberation Sans", sans-serif; }
.tab.narrow { width: 41px; color: #85888e; }
.tab svg { width: 16px; height: 16px; }
.tab.faded svg { opacity: .8; }
.tab span { width: 3px; overflow: hidden; }
.tab.last { border-right-color: transparent; }
.tab.active { position: relative; height: 34px; gap: 6px; border: 0; border-radius: 8px 8px 0 0; background: #fff; color: #45484d; }
.tab.active::before, .tab.active::after { content: ""; position: absolute; bottom: 0; width: 8px; height: 8px; }
.tab.active::before { right: 100%; background: radial-gradient(circle at 0 0, transparent 8px, #fff 8px); }
.tab.active::after { left: 100%; background: radial-gradient(circle at 100% 0, transparent 8px, #fff 8px); }
.tab.active span { width: 5px; }
.tab.active svg { width: 14px; height: 14px; }
.newtab { margin-left: 15px; color: #3c4043; }
.newtab svg, .winctl svg { width: 14px; height: 14px; }
.winctl { display: flex; margin-left: auto; padding-right: 2px; }
.winctl button { width: 32px; }

.toolbar { display: flex; align-items: center; gap: 6px; height: 36px; padding: 0 6px; background: #fff; }
.toolgroup { display: flex; }
.toolgroup button { width: 32px; height: 28px; }
.toolgroup svg { width: 20px; height: 20px; }
.toolgroup [aria-label="Grammarly"] svg, .toolgroup [aria-label="Extensions"] svg { width: 16px; height: 16px; }
.dim { color: #bdc1c6; }
.profile { width: 22px; height: 22px; border-radius: 50%; background: #8600a0; color: #fff; font-size: 11px; line-height: 22px; }
.omnibox { flex: 1; display: flex; align-items: center; height: 28px; padding: 0 9px 0 11px; border-radius: 14px; background: #f1f2f5; }
.lock { width: 13px; height: 13px; }
.omnibox input {
  flex: 1; border: 0; padding: 0; margin-left: 10px; outline: 0; font-size: 13px; line-height: 28px; height: 28px;
  color: transparent;
  background: linear-gradient(to right, #202124 70px, #5f6368 70px);
  -webkit-background-clip: text; background-clip: text;
}
.omnibox svg:not(.lock) { width: 18px; height: 18px; }
.bookmarks { height: 33px; padding-left: 15px; font-size: 14px; line-height: 30px; }
.bookmarks a { display: inline-flex; align-items: center; gap: 9px; color: #3c4043; }
.bookmarks svg { width: 14px; height: 14px; }

/* page viewport */
.viewport { flex: 1; min-height: 0; display: flex; overflow: hidden; }
.page { flex: 1; min-width: 0; }
.scrollbar { flex: none; display: flex; flex-direction: column; align-items: center; width: 15px; background: #f1f1f2; }
.track { flex: 1; width: 11px; margin: 4px 0; }
.thumb { height: 62%; background: #c1c1c3; }
.up, .down { margin-top: 6px; border: 4px solid transparent; }
.up { border-top: 0; border-bottom-color: #8f9093; margin-bottom: 1px; }
.down { border-bottom: 0; border-top-color: #4b4c50; margin: 0 0 6px; }

.site-header { display: flex; align-items: center; gap: 16px; height: 62px; padding: 0 32px; background: #26282f; color: #fff; }
.site-header a { color: inherit; }
.mark svg { width: 32px; height: 32px; }
.search { display: flex; align-items: center; width: 272px; height: 30px; padding: 0 8px 0 12px; border: 1px solid #464954; border-radius: 6px; }
.search input { flex: 1; min-width: 0; border: 0; padding: 0; outline: 0; background: none; }
.search input::placeholder { color: #c6c7cc; opacity: 1; }
.search kbd { width: 19px; height: 20px; border: 1px solid #5a5d68; border-radius: 4px; color: #8c8f99; font: 12px/18px "Liberation Sans", sans-serif; text-align: center; }
.site-header nav { display: flex; gap: 16px; font-weight: 700; }
.user { display: flex; align-items: center; gap: 16px; margin-left: auto; }
.user .plain { color: #fff; gap: 4px; }
.avatar-sm { width: 20px; height: 20px; }

.repo-head { padding-top: 16px; border-bottom: 1px solid var(--line); background: var(--canvas); }
.repo-row { display: flex; align-items: flex-end; justify-content: space-between; padding: 0 32px; }
.repo-row h1 { display: flex; align-items: center; font-size: 20px; line-height: 30px; }
.repo-row h1 .icon { margin-right: 8px; color: #6a6878; }
.repo-row h1 span { margin: 0 4px; color: var(--muted); }
.repo-actions { display: flex; gap: 10px; }
.count-btn { display: flex; height: 28px; border: 1px solid #d9dadf; border-radius: 6px; background: #fff; box-shadow: 0 1px 0 rgba(27, 31, 35, .04); font-size: 12px; line-height: 26px; overflow: hidden; }
.count-btn button { display: flex; align-items: center; gap: 3px; padding: 0 12px; border: 0; border-right: 1px solid #d9dadf; background: var(--canvas); }
.count-btn .icon { color: #6f7080; }
.count-btn .caret { margin-left: 4px; color: #4a4956; }
.count-btn a { padding: 0 12px; color: var(--text); font-weight: 700; }
.count-btn.star button { gap: 8px; }
.fork button { color: #77788a; }
.repo-nav { display: flex; gap: 3px; margin: 18px 32px -1px; }
.repo-nav a { display: flex; align-items: center; gap: 8px; padding: 8px 16px; border-bottom: 2px solid transparent; color: var(--text); line-height: 30px; }
.repo-nav .icon { color: var(--icon); }
.repo-nav .selected { border-bottom-color: #f9786a; font-weight: 700; gap: 6px; margin-right: -3px; }
.repo-nav .selected .icon { color: var(--text); }

.container { max-width: 1280px; margin: 0 auto; padding: 32px 32px 0; }
.subhead { margin-bottom: 16px; padding-bottom: 24px; border-bottom: 1px solid var(--line); }
.subhead h2 { font-size: 24px; line-height: 36px; }
.subhead p { color: var(--muted); }

.range { display: flex; align-items: center; margin-bottom: 15px; padding: 10px 15px; border: 1px solid var(--line); border-radius: 6px; background: var(--canvas); color: var(--muted); }
.btn-sm { display: flex; align-items: center; gap: 3px; height: 28px; margin-left: 14px; padding: 0 12px; border: 1px solid #d9dadf; border-radius: 6px; background: var(--canvas); box-shadow: 0 1px 0 rgba(27, 31, 35, .06); color: var(--text); font-size: 12px; }
.btn-sm span { color: #69687a; }
.arrow { margin: 0 -5px 0 10px; }
.merge { display: flex; align-items: center; gap: 4px; margin-left: 14px; }
.merge .icon, .merge strong { color: #149535; }

.columns { display: grid; grid-template-columns: minmax(0, 1fr) 280px; gap: 32px; }
.discussion { display: grid; grid-template-columns: 40px minmax(0, 1fr); gap: 16px; align-items: start; }
.avatar { width: 40px; height: 40px; }
.compose { position: relative; padding: 8px 0; border: 1px solid var(--line); border-radius: 6px; }
.compose::before { content: ""; position: absolute; left: -6px; top: 14px; width: 10px; height: 10px; border: 1px solid var(--line); border-top: 0; border-right: 0; background: #fff; transform: rotate(45deg); }
.title-field { position: relative; margin: 0 8px; }
.title-field input { display: block; width: 100%; height: 32px; padding: 0 12px; border: 1px solid var(--link); border-radius: 6px; outline: 0; background: #fff; box-shadow: 0 0 0 3px #b7c5f2; font-size: 16px; }
.title-field::after { content: ""; position: absolute; left: 13px; top: 8px; width: 1px; height: 17px; background: #111; }
.compose-head { display: flex; justify-content: space-between; margin-top: 16px; padding: 0 8px; border-bottom: 1px solid var(--line); }
.compose-tabs { display: flex; margin-bottom: -1px; }
.compose-tabs button { height: 40px; padding: 0 16px; border: 1px solid transparent; background: none; color: #6a6978; }
.compose-tabs .on { margin-right: 4px; border-color: var(--line); border-bottom-color: #fff; border-radius: 6px 6px 0 0; background: #fff; color: var(--text); }
.md-tools { display: flex; gap: 16px; height: 30px; color: var(--muted); }
.md-tools div { display: flex; }
.md-tools button { display: flex; align-items: center; justify-content: center; min-width: 32px; padding: 0; border: 0; background: none; }
.md-tools button .caret { margin-left: 4px; }
.md-tools button:has(.caret) { padding: 0 4px 0 8px; }
.editor { margin: 8px 8px 0; border: 1px solid var(--line); border-radius: 6px; background: var(--canvas); overflow: hidden; }
.editor textarea { display: block; width: 100%; height: 198px; padding: 8px; border: 0; outline: 0; background: none; resize: vertical; }
.editor textarea::placeholder { color: #737280; opacity: 1; }
.attach { display: flex; align-items: center; justify-content: space-between; height: 31px; padding: 0 10px; border-top: 1px dashed #dcdde3; color: var(--muted); font-size: 13px; }
.submit { display: flex; justify-content: flex-end; margin: 8px 8px 0; }
.submit button { height: 32px; padding: 0 16px; border: 1px solid #14a34c; border-radius: 6px 0 0 6px; background: #00bb53; color: #fff; }
.submit button + button { display: flex; align-items: center; margin-left: -1px; border-radius: 0 6px 6px 0; }
.remember { display: flex; align-items: center; margin: 16px 0 0 8px; color: var(--muted); font-size: 12px; line-height: 18px; }
.remember .icon { margin-right: 4px; }

.sidebar { color: var(--muted); font-size: 12px; line-height: 18px; }
.sidebar section { padding: 16px 0; border-bottom: 1px solid var(--line); }
.sidebar section:last-child { border: 0; padding-bottom: 20px; }
.sidebar h3 { display: flex; align-items: center; justify-content: space-between; height: 18px; margin-bottom: 8px; font-size: 12px; font-weight: 700; line-height: 18px; }
.sidebar .icon { color: var(--icon); }
.sidebar .dark { color: var(--muted); }

.totals { display: flex; padding: 0 8px; border: 1px solid var(--line); border-radius: 6px; list-style: none; color: #69687a; }
.totals li { flex: 1; display: flex; align-items: center; justify-content: center; gap: 4px; padding: 8px 0; }
.totals strong { color: var(--text); }
```
